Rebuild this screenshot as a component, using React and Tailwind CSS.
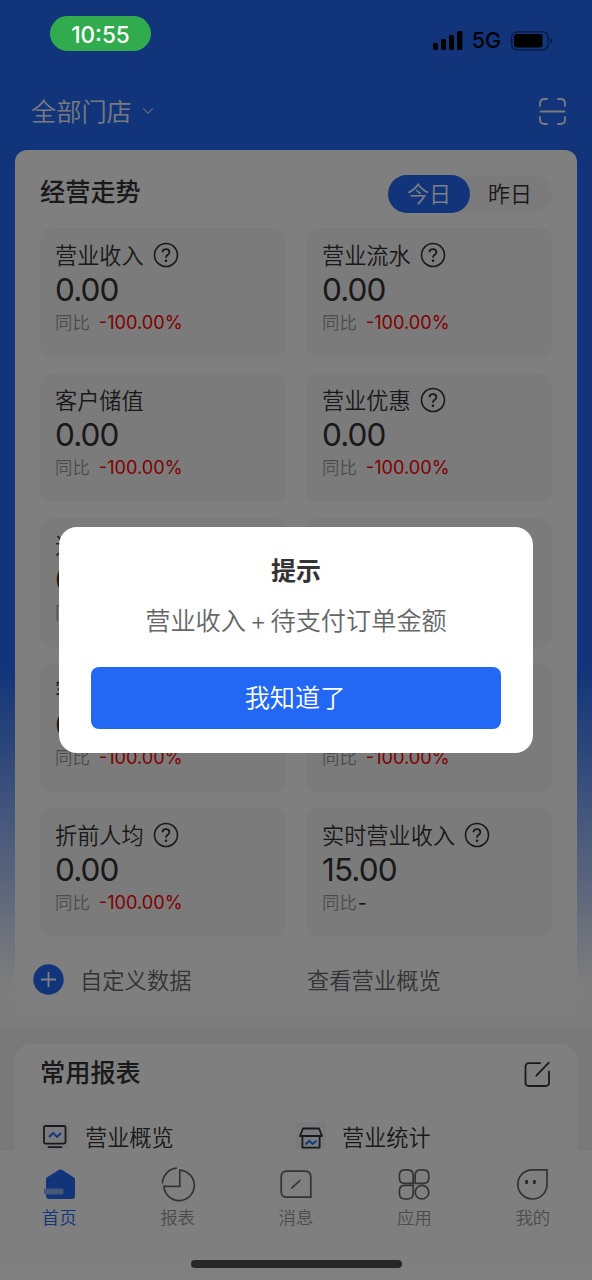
import { ChevronDown } from "lucide-react";

const METRICS = [
  { label: "营业收入", value: "0.00", change: "-100.00%", help: true },
  { label: "营业流水", value: "0.00", change: "-100.00%", help: true },
  { label: "客户储值", value: "0.00", change: "-100.00%" },
  { label: "营业优惠", value: "0.00", change: "-100.00%", help: true },
  { label: "退款金额", value: "0.00", change: "-100.00%" },
  { label: "订单数", value: "0.00", change: "-100.00%" },
  { label: "客单价", value: "0.00", change: "-100.00%" },
  { label: "折后人均", value: "0.00", change: "-100.00%" },
  { label: "折前人均", value: "0.00", change: "-100.00%", help: true },
  { label: "实时营业收入", value: "15.00", help: true },
];

const TABS = [
  { label: "首页", Icon: HomeIcon, active: true },
  { label: "报表", Icon: ReportIcon },
  { label: "消息", Icon: MessageIcon },
  { label: "应用", Icon: AppsIcon },
  { label: "我的", Icon: ProfileIcon },
];

function HomeIcon() {
  return (
    <svg width="36" height="36" viewBox="0 0 36 36">
      <path
        d="M5 13.4 Q5 11.9 6.1 11.2 L17.3 4.2 Q19.5 2.8 21.7 4.2 L32.6 11.2 Q34 12 34 13.4 V29.5 Q34 33 30.5 33 H8.4 Q5 33 5 30 Z"
        fill="#2268f4"
      />
      <rect x="3" y="22.6" width="19.5" height="6" rx="1.5" fill="#8fb1f7" />
    </svg>
  );
}

function ReportIcon() {
  return (
    <svg width="36" height="36" viewBox="0 0 36 36" fill="none" stroke="#666" strokeWidth="1.7">
      <path d="M2.4 17.5 A15.6 15.6 0 0 1 16.8 2.2" />
      <path d="M19.8 4.2 A15.2 15.2 0 1 1 3.9 20.4 H19.8 Z" />
    </svg>
  );
}

function MessageIcon() {
  return (
    <svg width="36" height="36" viewBox="0 0 36 36" fill="none" stroke="#666" strokeWidth="1.7">
      <path d="M9 5.2 H27 Q32.8 5.2 32.8 11 V31.2 H9 Q3.2 31.2 3.2 25.4 V11 Q3.2 5.2 9 5.2 Z" />
      <path d="M13.4 22.4 L22.4 14" />
    </svg>
  );
}

function AppsIcon() {
  return (
    <svg width="36" height="36" viewBox="0 0 36 36" fill="none" stroke="#666" strokeWidth="1.7">
      <path d="M17.2 17.4 H8.8 Q3.4 17.4 3.4 12 V9.2 Q3.4 3.8 8.8 3.8 H11.8 Q17.2 3.8 17.2 9.2 Z" />
      <path d="M19.2 17.4 V9.2 Q19.2 3.8 24.6 3.8 H27.4 Q32.8 3.8 32.8 9.2 V12 Q32.8 17.4 27.4 17.4 Z" />
      <path d="M17.2 19.4 H8.8 Q3.4 19.4 3.4 24.8 V27.6 Q3.4 33 8.8 33 H11.8 Q17.2 33 17.2 27.6 Z" />
      <circle cx="26" cy="26.2" r="6.8" />
    </svg>
  );
}

function ProfileIcon() {
  return (
    <svg width="36" height="36" viewBox="0 0 36 36" fill="none" stroke="#666" strokeWidth="1.7">
      <path d="M32 3.8 H17.6 A14.6 14.6 0 1 0 32 18.4 Z" />
      <ellipse cx="11.6" cy="16" rx="1.6" ry="2.2" fill="#555" stroke="none" />
      <ellipse cx="19.4" cy="16" rx="1.6" ry="2.2" fill="#555" stroke="none" />
    </svg>
  );
}

function HelpIcon() {
  return (
    <svg width="26" height="26" viewBox="0 0 26 26" fill="none" stroke="#333" strokeWidth="1.6">
      <circle cx="13" cy="13" r="11.5" />
      <path d="M9.4 10.3 Q9.6 7.2 13 7.2 Q16.4 7.2 16.4 10.2 Q16.4 11.7 14.7 12.8 Q13 13.9 13 15.8" strokeWidth="1.8" />
      <circle cx="13" cy="18.8" r="1.3" fill="#333" stroke="none" />
    </svg>
  );
}

function StatusBar() {
  return (
    <div className="flex h-[81px] items-center justify-end pr-[38px]">
      <svg width="30" height="20" viewBox="0 0 30 20">
        <rect x="0" y="12" width="5" height="7" rx="1.4" />
        <rect x="8" y="8" width="5" height="11" rx="1.4" />
        <rect x="16" y="4" width="5" height="15" rx="1.4" />
        <rect x="24" y="0" width="5.4" height="19" rx="1.4" />
      </svg>
      <span className="ml-[9px] text-[21.5px] font-medium leading-none text-black">5G</span>
      <svg className="ml-[9px]" width="44" height="20" viewBox="0 0 44 20">
        <rect x="1.7" y="0.9" width="36.6" height="18" rx="5.5" fill="none" stroke="#000" strokeOpacity="0.5" strokeWidth="1.3" />
        <rect x="4" y="3" width="28.5" height="13.6" rx="3" />
        <path d="M40.3 7 Q42.3 8 42.3 10 Q42.3 12 40.3 13 Z" fillOpacity="0.55" />
      </svg>
    </div>
  );
}

function MetricCard({ label, value, change, help }) {
  return (
    <div className="h-[129px] rounded-xl bg-[#f7f7f7] pl-[15px] pt-3 text-[#333] even:pl-4">
      <div className="flex h-[30px] items-center">
        <span className="pt-0.5 text-[22.2px]">{label}</span>
        {help && (
          <span className="ml-[9px]">
            <HelpIcon />
          </span>
        )}
      </div>
      <div className="flex h-[38px] items-center pt-px text-[31.5px] font-normal tracking-[-0.9px]">{value}</div>
      <div className="flex h-[30px] items-center text-[17.4px]">
        <span className="pt-px text-[#999]">同比</span>
        {change ? (
          <span className="ml-[9px] text-[18.2px] font-normal text-[#ff0000]">{change}</span>
        ) : (
          <span className="ml-px text-[20px] font-normal">-</span>
        )}
      </div>
    </div>
  );
}

function TrendPanel() {
  return (
    <section className="mx-[15px] h-[863px] rounded-xl bg-white px-[25px]">
      <div className="flex h-[78px] items-center justify-between pt-2">
        <h2 className="text-[25.2px] font-medium text-[#333]">经营走势</h2>
        <div className="mt-0.5 flex h-[38px] w-[164px] rounded-full bg-[#f7f7f7] text-[22px]">
          <button className="w-[82px] rounded-full bg-[#2268f4] text-white">今日</button>
          <button className="w-[80px] text-[#333]">昨日</button>
        </div>
      </div>
      <div className="grid grid-cols-2 gap-x-5 gap-y-4">
        {METRICS.map((m) => (
          <MetricCard key={m.label} {...m} />
        ))}
      </div>
      <div className="grid h-[85px] grid-cols-2 items-center gap-x-5 text-[22.3px] text-[#666]">
        <div className="-ml-[7px] flex items-center gap-4">
          <svg width="31" height="31" viewBox="0 0 31 31">
            <circle cx="15.5" cy="15.5" r="15.2" fill="#2268f4" />
            <path d="M8 15.5 H23 M15.5 8 V23" stroke="#fff" strokeWidth="1.8" />
          </svg>
          <span className="pt-0.5">自定义数据</span>
        </div>
        <div className="pl-px pt-0.5">查看营业概览</div>
      </div>
    </section>
  );
}

function ReportsPanel() {
  return (
    <section className="mx-[15px] h-[120px] rounded-t-2xl bg-white pl-[25px] pr-[26px]">
      <div className="flex h-[58px] items-center justify-between">
        <h2 className="pt-0.5 text-[25.2px] font-medium text-[#333]">常用报表</h2>
        <svg width="27" height="27" viewBox="0 0 27 27" fill="none" stroke="#333" strokeWidth="1.8" strokeLinecap="round" className="mt-0.5">
          <path d="M16 2.2 H5 Q1.5 2.2 1.5 5.7 V21.5 Q1.5 25 5 25 H21.5 Q25 25 25 21.5 V10.5" />
          <path d="M12.3 14.7 L24.8 1.6" />
        </svg>
      </div>
      <div className="flex pt-[18px] text-[22.2px] text-[#333]">
        <div className="flex w-[256px] items-center gap-[15px]">
          <svg width="30" height="30" viewBox="0 0 30 30" fill="none" strokeWidth="1.8">
            <rect width="30" height="30" rx="3" fill="#f3f6fe" />
            <rect x="4" y="4" width="21.5" height="17.6" rx="1.5" stroke="#333" />
            <path d="M8.5 25.2 H21.5" stroke="#333" strokeLinecap="round" />
            <path d="M9 15 L13.2 11 L17 15 L21 11" stroke="#2268f4" />
          </svg>
          <span className="pt-px">营业概览</span>
        </div>
        <div className="flex items-center gap-[16px]">
          <svg width="30" height="30" viewBox="0 0 30 30" fill="none" strokeWidth="1.8">
            <rect width="30" height="30" rx="3" fill="#f3f6fe" />
            <path d="M7 6.5 H23 L26 14 H4 Z M6.4 14.5 V25.6 H23.6 V14.5" stroke="#333" strokeLinejoin="round" />
            <path d="M9.5 22.5 L13.5 18.8 L16.5 22 L20.5 18.8" stroke="#2268f4" />
          </svg>
          <span className="pt-px">营业统计</span>
        </div>
      </div>
    </section>
  );
}

function TabBar() {
  return (
    <nav className="relative flex h-[130px] shrink-0 bg-white pt-4">
      {TABS.map(({ label, Icon, active }) => (
        <div key={label} className="flex flex-1 flex-col items-center">
          <Icon />
          <span className={`mt-[3px] text-[17.4px] leading-[26px] ${active ? "text-[#2268f4]" : "text-[#999]"}`}>{label}</span>
        </div>
      ))}
    </nav>
  );
}

function NoticeDialog() {
  return (
    <div className="absolute inset-0 flex items-center justify-center bg-black/50">
      <div className="flex h-[226px] w-[474px] flex-col items-center rounded-[18px] bg-white px-8 pt-[25px]">
        <h3 className="text-[25px] font-bold leading-[38px] text-[#333]">提示</h3>
        <p className="mt-3 text-[25.2px] leading-[38px] text-[#666]">
          营业收入<span className="mx-1">+</span>待支付订单金额
        </p>
        <button className="mt-[27px] h-[62px] w-full rounded-lg bg-[#2268f4] pr-0.5 pt-0.5 text-[25.2px] text-white">我知道了</button>
      </div>
    </div>
  );
}

export default function App() {
  return (
    <div className="relative flex h-[1280px] w-[592px] flex-col overflow-hidden bg-[#f2f2f2] font-['Inter','Noto_Sans_CJK_SC',sans-serif] font-[350]">
      <main className="h-[1150px] shrink-0 overflow-hidden">
        <div className="h-[1028px] bg-[linear-gradient(180deg,#2268f4_0,#2268f4_665px,#fafafa_985px)]">
          <StatusBar />
          <div className="flex h-[69px] items-center justify-between pb-2 pl-[31px] pr-[25px] text-white/95">
            <div className="flex items-center gap-[7px] text-[25.2px]">
              <span className="pt-0.5">全部门店</span>
              <ChevronDown size={18} strokeWidth={1.4} />
            </div>
            <svg width="29" height="29" viewBox="0 0 29 29" fill="none" stroke="currentColor" strokeWidth="1.8" strokeLinecap="round">
              <path d="M2 9 V6.5 Q2 2 6.5 2 H9 M20 2 H22.5 Q27 2 27 6.5 V9 M27 20 V22.5 Q27 27 22.5 27 H20 M9 27 H6.5 Q2 27 2 22.5 V20 M2.5 14.5 H26.5" />
            </svg>
          </div>
          <TrendPanel />
        </div>
        <div className="h-4" />
        <ReportsPanel />
      </main>
      <TabBar />
      <NoticeDialog />
      {/* system chrome stays above the dialog mask */}
      <div className="absolute left-[50px] top-4 flex h-[35px] w-[101px] items-center justify-center rounded-full bg-[#30ab4e] pt-0.5 text-[22.5px] font-medium text-white">
        10:55
      </div>
      <div className="absolute bottom-[12px] left-[191px] h-2 w-[211px] rounded-full bg-[#272727]" />
    </div>
  );
}
